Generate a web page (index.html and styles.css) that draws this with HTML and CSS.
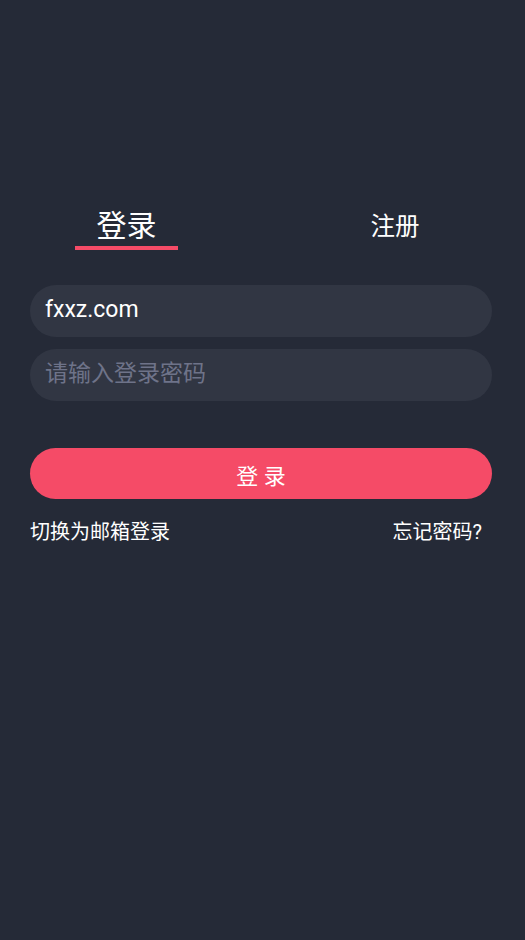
FILE: index.html
```html
<!DOCTYPE html>
<html lang="zh-CN">
<head>
<meta charset="utf-8">
<title>登录</title>
<link rel="stylesheet" href="styles.css">
</head>
<body>
<div class="page">
  <div class="tabs">
    <div class="tab active">登录</div>
    <div class="tab">注册</div>
  </div>
  <form class="form">
    <div class="field"><input class="input" type="text" value="fxxz.com"></div>
    <div class="field"><input class="input" type="password" placeholder="请输入登录密码"></div>
    <button class="submit" type="button">登 录</button>
    <div class="links">
      <span class="link">切换为邮箱登录</span>
      <span class="link">忘记密码?</span>
    </div>
  </form>
</div>
</body>
</html>
```
FILE: styles.css
```css
html, body {
  margin: 0;
  padding: 0;
  background: #252a37;
}
body {
  font-family: Roboto, "Noto Sans CJK SC", sans-serif;
  color: #ffffff;
}
.page {
  width: 525px;
  height: 940px;
  box-sizing: border-box;
  padding-top: 206px;
}
.tabs {
  display: flex;
  padding: 0 80px 0 0;
  height: 45px;
}
.tab {
  font-size: 24px;
  line-height: 40px;
  text-align: center;
}
.tab.active {
  width: 103px;
  margin-left: 75px;
  font-size: 30px;
  line-height: 40px;
  border-bottom: 4px solid #f54b67;
  height: 40px;
}
.tab:not(.active) {
  margin-left: auto;
  width: 100px;
  padding-top: 1px;
  font-size: 24.5px;
}
.form {
  margin: 34px 33px 0 30px;
  display: flex;
  flex-direction: column;
}
.field {
  margin-bottom: 12px;
}
.input {
  display: block;
  width: 100%;
  box-sizing: border-box;
  height: 52px;
  border: none;
  outline: none;
  border-radius: 26px;
  background: #313643;
  padding: 0 15px 3px;
  font-family: Roboto, "Noto Sans CJK SC", sans-serif;
  font-size: 23px;
  color: #ffffff;
}
.input::placeholder {
  color: #6e7389;
}
.submit {
  margin-top: 35px;
  height: 51px;
  border: none;
  border-radius: 26px;
  background: #f54b67;
  color: #ffffff;
  font-family: Roboto, "Noto Sans CJK SC", sans-serif;
  font-size: 22px;
  padding: 0;
}
.links {
  display: flex;
  justify-content: space-between;
  margin-top: 18px;
  padding-right: 10px;
  font-size: 20px;
  line-height: 30px;
}
```
